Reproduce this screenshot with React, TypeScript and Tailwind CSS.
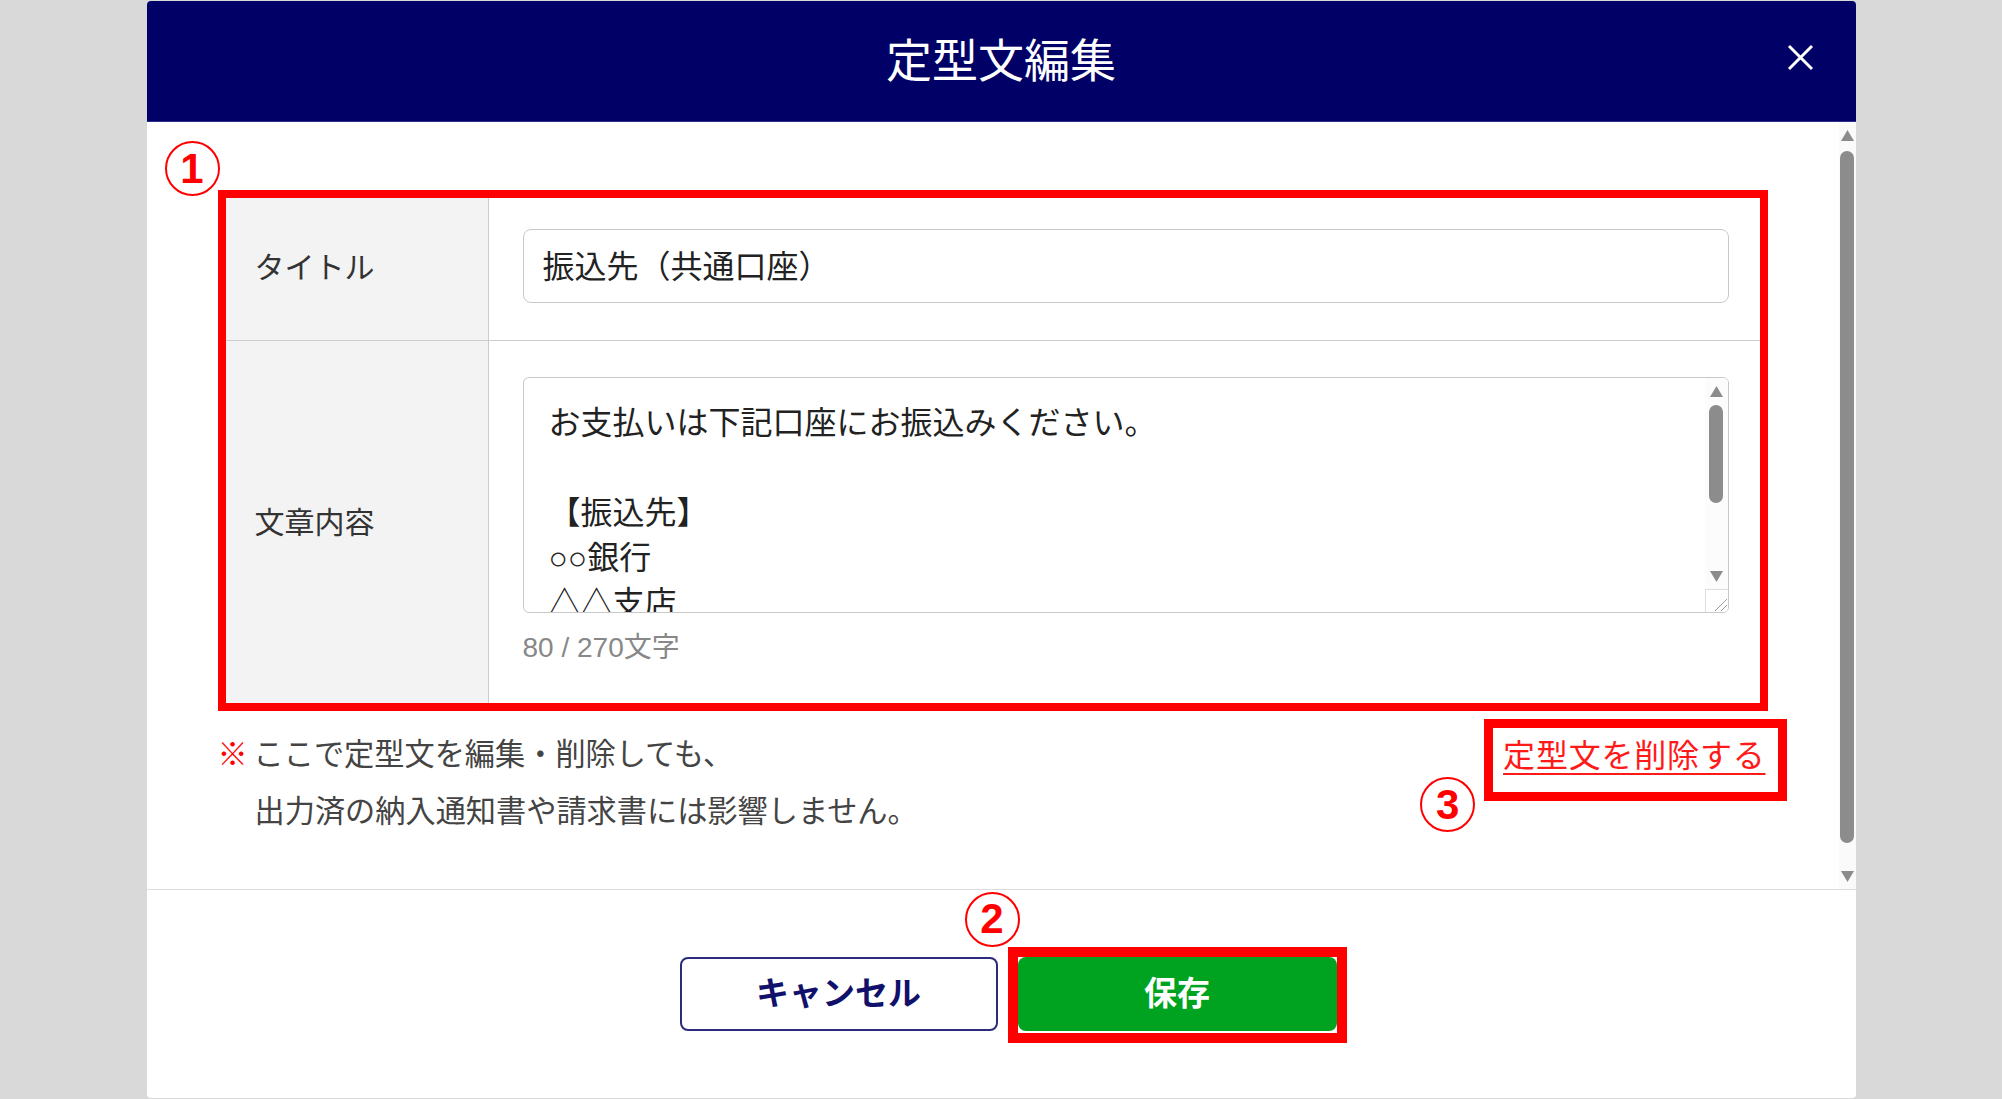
import React from "react";

function Marker({ n, className }: { n: string; className: string }) {
  return (
    <div
      className={
        "absolute flex h-[55px] w-[55px] items-center justify-center rounded-full border-[2.5px] border-[#ff0000] bg-white font-['Liberation_Sans',sans-serif] text-[42px] font-bold leading-none text-[#ff0000] " +
        className
      }
    >
      {n}
    </div>
  );
}

function UpArrow({ className }: { className: string }) {
  return (
    <svg viewBox="0 0 12 10" className={className}>
      <polygon points="6,0 12,10 0,10" fill="#8c8c8c" />
    </svg>
  );
}

function DownArrow({ className }: { className: string }) {
  return (
    <svg viewBox="0 0 12 10" className={className}>
      <polygon points="0,0 12,0 6,10" fill="#8c8c8c" />
    </svg>
  );
}

export default function App() {
  return (
    <div className="min-h-screen w-full bg-[#d9d9d9] pt-[1px] font-['Liberation_Sans','Noto_Sans_CJK_JP',sans-serif] text-[#333]">
      <div className="mx-auto flex h-[1097px] w-[1709px] flex-col overflow-hidden rounded-[4px] bg-white">
        {/* header */}
        <header className="relative flex h-[121px] shrink-0 items-center justify-center border-b border-[#2c2c85] bg-[#000066]">
          <h1 className="text-[46px] leading-none text-white">定型文編集</h1>
          <button className="absolute right-[42px] top-[43px] h-[27px] w-[27px]">
            <svg viewBox="0 0 27 27" className="h-[27px] w-[27px]">
              <path d="M2 2 L25 25 M25 2 L2 25" stroke="white" strokeWidth="3" />
            </svg>
          </button>
        </header>

        {/* body */}
        <div className="flex h-[767px] shrink-0">
          <div className="flex-1 px-[71px] pt-[68px]">
            <div className="relative border-[8px] border-[#ff0000]">
              <Marker n="1" className="-left-[61px] -top-[57px]" />
              <div className="grid grid-cols-[263px_1fr]">
                <div className="flex items-center border-b border-r border-[#cccccc] bg-[#f3f3f3] pb-[4px] pl-[29px] text-[30px] text-[#333]">
                  タイトル
                </div>
                <div className="border-b border-[#cccccc] pb-[37px] pl-[34px] pr-[31px] pt-[31px]">
                  <input
                    readOnly
                    defaultValue="振込先（共通口座）"
                    className="h-[74px] w-full rounded-[8px] border border-[#c8c8c8] px-[19px] pb-[4px] text-[32px] text-[#222] outline-none"
                  />
                </div>
                <div className="flex items-center border-r border-[#cccccc] bg-[#f3f3f3] pl-[29px] text-[30px] text-[#333]">
                  文章内容
                </div>
                <div className="pb-[35px] pl-[34px] pr-[31px] pt-[36px]">
                  <div className="flex h-[236px] overflow-hidden rounded-[6px] border border-[#c8c8c8]">
                    <div className="flex-1 overflow-hidden pl-[25px] pt-[23px] text-[32px] leading-[45px] text-[#222]">
                      <div>お支払いは下記口座にお振込みください。</div>
                      <div>&nbsp;</div>
                      <div>【振込先】</div>
                      <div>
                        <span className="font-['Liberation_Sans',sans-serif]">○○</span>銀行
                      </div>
                      <div>△△支店</div>
                    </div>
                    <div className="flex w-[23px] flex-col items-center bg-[#fcfcfc]">
                      <UpArrow className="mt-[8px] h-[11px] w-[13px]" />
                      <div className="mt-[8px] h-[98px] w-[14px] rounded-full bg-[#8c8c8c]" />
                      <div className="flex-1" />
                      <DownArrow className="mb-[7px] h-[11px] w-[13px]" />
                      <div className="relative h-[23px] w-full border-l border-t border-[#dddddd] bg-white">
                        <svg viewBox="0 0 23 23" className="absolute inset-0 h-[23px] w-[23px]">
                          <path d="M9 21 L21 9 M15 21 L21 15" stroke="#999" strokeWidth="1" />
                        </svg>
                      </div>
                    </div>
                  </div>
                  <div className="mt-[15px] text-[28px] leading-[40px] text-[#888]">80 / 270文字</div>
                </div>
              </div>
            </div>

            {/* notes + delete link */}
            <div className="flex items-start justify-between">
              <div className="mt-[15px] text-[30.2px] leading-[57px] text-[#444]">
                <div className="flex">
                  <span className="w-[36px] font-bold text-[#ff0000]">※</span>
                  <span>ここで定型文を編集・削除しても、</span>
                </div>
                <div className="pl-[37px]">出力済の納入通知書や請求書には影響しません。</div>
              </div>
              <div className="relative mr-[2px] mt-[23px]">
                <a className="block text-[32px] leading-[45px] tracking-[0.8px] text-[#ff1a1a] underline decoration-[2px] underline-offset-[6px]">
                  定型文を削除する
                </a>
                <div className="absolute -bottom-[22px] -left-[19px] -right-[21px] -top-[15px] border-[9px] border-[#ff0000]" />
                <Marker n="3" className="-left-[83px] top-[43px]" />
              </div>
            </div>
          </div>

          {/* page scrollbar */}
          <div className="flex w-[17px] flex-col items-center bg-[#fafafa]">
            <UpArrow className="mt-[8px] h-[11px] w-[13px]" />
            <div className="mt-[10px] h-[692px] w-[14px] rounded-full bg-[#8c8c8c]" />
            <div className="flex-1" />
            <DownArrow className="mb-[7px] h-[11px] w-[13px]" />
          </div>
        </div>

        {/* footer */}
        <footer className="flex h-[208px] shrink-0 items-center justify-center gap-[20px] border-t border-[#dddddd] pl-[14px]">
          <button className="h-[74px] w-[318px] rounded-[8px] border-2 border-[#2b2b7a] bg-white text-[33px] font-bold text-[#11116b]">
            キャンセル
          </button>
          <div className="relative">
            <button className="h-[74px] w-[319px] rounded-[8px] bg-[#00a31f] text-[33px] font-bold text-white">
              保存
            </button>
            <div className="pointer-events-none absolute -bottom-[12px] -left-[10px] -right-[10px] -top-[10px] border-[10px] border-[#ff0000]" />
            <Marker n="2" className="-left-[53px] -top-[65px]" />
          </div>
        </footer>
      </div>
    </div>
  );
}
